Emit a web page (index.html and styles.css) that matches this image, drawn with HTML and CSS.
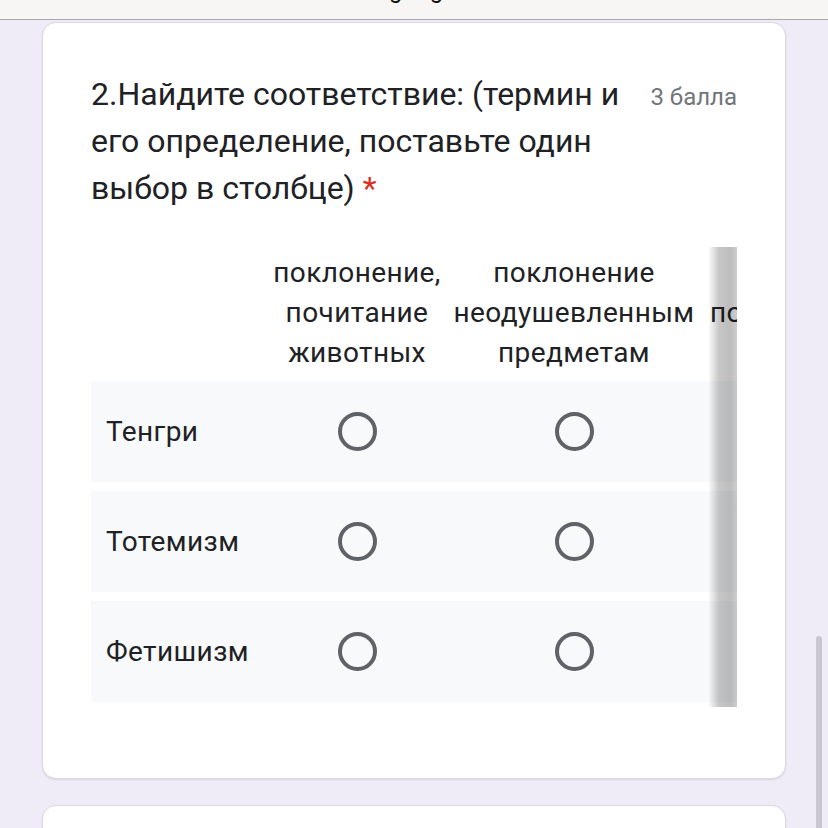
FILE: index.html
```html
<!DOCTYPE html>
<html lang="ru">
<head>
<meta charset="utf-8">
<title>Форма</title>
<link rel="stylesheet" href="styles.css">
</head>
<body>
<div class="topbar"><div class="url">docs.google.com</div></div>
<main class="page">
  <section class="card">
    <div class="q-head">
      <div class="q-title">2.Найдите соответствие: (термин и его определение, поставьте один выбор в столбце) <span class="req">*</span></div>
      <div class="q-points">3 балла</div>
    </div>
    <div class="grid-wrap">
      <div class="grid-scroll">
        <div class="grid-row header">
          <div class="cell label"></div>
          <div class="cell col">поклонение, почитание животных</div>
          <div class="cell col">поклонение неодушевленным предметам</div>
          <div class="cell col last">поклонение духам</div>
        </div>
        <div class="grid-row body">
          <div class="cell label">Тенгри</div>
          <div class="cell col"><span class="radio"></span></div>
          <div class="cell col"><span class="radio"></span></div>
          <div class="cell col"><span class="radio"></span></div>
        </div>
        <div class="grid-row body">
          <div class="cell label">Тотемизм</div>
          <div class="cell col"><span class="radio"></span></div>
          <div class="cell col"><span class="radio"></span></div>
          <div class="cell col"><span class="radio"></span></div>
        </div>
        <div class="grid-row body">
          <div class="cell label">Фетишизм</div>
          <div class="cell col"><span class="radio"></span></div>
          <div class="cell col"><span class="radio"></span></div>
          <div class="cell col"><span class="radio"></span></div>
        </div>
      </div>
      <div class="scroll-shadow"></div>
    </div>
  </section>
  <section class="card next"></section>
</main>
<div class="scroll-thumb"></div>
</body>
</html>
```

FILE: styles.css
```css
html, body {
  margin: 0;
  padding: 0;
}
body {
  background: #efebf7;
  font-family: Roboto, "Noto Sans", "Liberation Sans", sans-serif;
  color: #202124;
  height: 828px;
  overflow: hidden;
}
.topbar {
  height: 19px;
  background: #f7f6f5;
  border-bottom: 1px solid #a9a9a9;
  overflow: hidden;
  text-align: center;
}
.url {
  font-size: 24px;
  line-height: 24px;
  margin-top: -22px;
  padding-left: 18px;
  color: #111;
}
.page {
  padding: 0 42px;
}
.card {
  background: #fff;
  border: 1px solid #dcd9e0;
  border-radius: 14px;
  box-shadow: 0 1px 2px rgba(60, 64, 67, 0.12);
  margin-top: 2px;
  padding: 48px 48px 71px 48px;
}
.card.next {
  margin-top: 26px;
  height: 200px;
  padding: 0;
}
.q-head {
  display: flex;
  align-items: baseline;
}
.q-title {
  flex: 1;
  font-size: 32px;
  line-height: 47px;
  color: #202124;
}
.req {
  color: #d93025;
}
.q-points {
  flex-shrink: 0;
  margin-left: 24px;
  font-size: 24px;
  color: #70757a;
}
.grid-wrap {
  position: relative;
  margin-top: 35px;
}
.grid-scroll {
  overflow: hidden;
  padding-bottom: 5px;
}
.grid-row {
  display: grid;
  grid-template-columns: 173px 186px 248px 240px;
  width: max-content;
}
.grid-row.header {
  padding: 6px 0 8px;
}
.grid-row.body {
  background: #f8f9fa;
  height: 101px;
  margin-bottom: 9px;
}
.grid-row.body:last-child {
  margin-bottom: 0;
}
.cell {
  display: flex;
  align-items: center;
  justify-content: center;
}
.header .cell {
  font-size: 28px;
  line-height: 40px;
  letter-spacing: 0.4px;
  text-align: center;
  color: #202124;
}
.header .cell.last {
  white-space: nowrap;
  justify-content: flex-start;
  padding-left: 12px;
}
.cell.label {
  justify-content: flex-start;
  padding-left: 15px;
  font-size: 28px;
  letter-spacing: 0.4px;
  color: #202124;
}
.radio {
  width: 31px;
  height: 31px;
  border: 4px solid #5f6368;
  border-radius: 50%;
}
.scroll-shadow {
  position: absolute;
  top: 0;
  bottom: 0;
  right: 0;
  width: 28px;
  background: linear-gradient(to right, rgba(0,0,0,0.02), rgba(0,0,0,0.22) 35%, rgba(0,0,0,0.26) 75%, rgba(0,0,0,0.2));
}
.scroll-thumb {
  position: fixed;
  left: 816px;
  top: 636px;
  width: 6px;
  height: 200px;
  background: #c9c5d1;
  border-radius: 3px;
}
```
